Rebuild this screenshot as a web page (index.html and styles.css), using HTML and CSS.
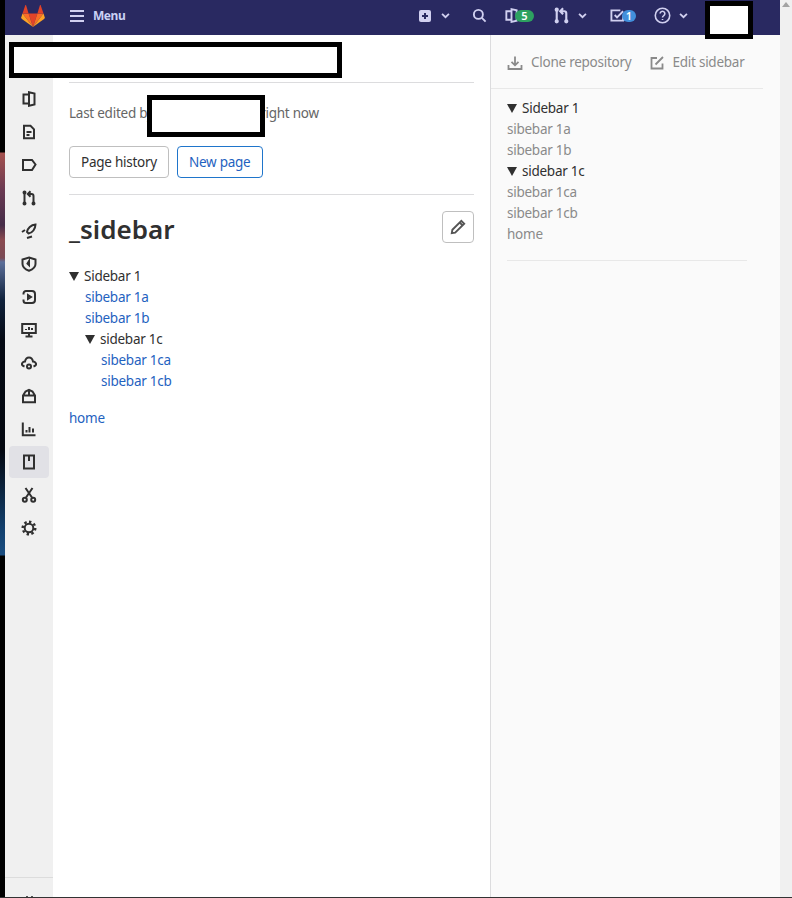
FILE: index.html
```html
<!DOCTYPE html>
<html lang="en">
<head>
    <meta charset="UTF-8">
    <meta name="viewport" content="width=device-width, initial-scale=1.0">
    <title>_sidebar · Wiki</title>
    <link rel="stylesheet" href="styles.css">
</head>

<body>
    <svg class="sprite" xmlns="http://www.w3.org/2000/svg">
        <symbol id="i-issues" viewBox="0 0 16 16"><path d="M8 1.200 13.500 2.500V13.500L8 14.800zM8 3.500H2.500V12.500H8"/></symbol>
        <symbol id="i-repo" viewBox="0 0 16 16"><path d="M3 1.800h6.500L13 5.300v8.900H3zM5.500 8h5M5.500 11h3"/></symbol>
        <symbol id="i-label" viewBox="0 0 16 16"><path d="M2 3h9l3.500 4.500L11 13H2z"/></symbol>
        <symbol id="i-mr" viewBox="0 0 16 16"><path d="M3.500 3v10M12.500 13V6a2 2 0 0 0-2-2H7.500M9.500 1.200 6.800 4l2.700 2.800"/><circle cx="3.500" cy="2.500" r="1"/><circle cx="3.500" cy="13.500" r="1"/><circle cx="12.500" cy="13.500" r="1"/></symbol>
        <symbol id="i-rocket" viewBox="0 0 16 16"><path d="M14.500 1.500c-4.500.3-8 3.600-8.500 7.500l1.500 1.500c4-.5 6.800-4.500 7-9zM1 9l3-2M6 15l5-1.500"/></symbol>
        <symbol id="i-shield" viewBox="0 0 16 16"><path d="M8 1.500 14.500 3.500V8c0 3.200-3 5.500-6.500 6.800C4.500 13.500 1.500 11.200 1.500 8V3.500zM8 5v4L6.500 7.500z"/></symbol>
        <symbol id="i-deploy" viewBox="0 0 16 16"><path d="M2.500 5.500V4.500a2.500 2.500 0 0 1 2.500-2.500h6a3 3 0 0 1 3 3v6a3 3 0 0 1-3 3H5a2.500 2.500 0 0 1-2.500-2.500V10.500M7 6l3 2-3 2z"/></symbol>
        <symbol id="i-monitor" viewBox="0 0 16 16"><path d="M1.200 2h13.600v9H1.200zM8 11v3M4.500 14.500h7M5 8V7M8 8V5M11 8V6"/></symbol>
        <symbol id="i-cloud" viewBox="0 0 16 16"><path d="M3.500 11.500C1.500 10.800.300 9.500 1.300 8 2 7 3 6.600 4 6.500 4.500 4 6 2.500 8 2.500s3.500 1.500 4 4c1 .100 2 .500 2.700 1.500 1 1.500-.200 2.800-2.200 3.500"/><circle cx="8" cy="11.500" r="2"/></symbol>
        <symbol id="i-package" viewBox="0 0 16 16"><path d="M2 7.500 4.500 3.500 8 1.800l3.500 1.700L14 7.500v6.700H2zM2 7.500h12M8 2v5.500"/></symbol>
        <symbol id="i-chart" viewBox="0 0 16 16"><path d="M1.800 1.500v12.700h12.700M5.500 9v2.500M8.500 6v5.500M12 7.500v4"/></symbol>
        <symbol id="i-wiki" viewBox="0 0 16 16"><path d="M3 1.500h10v13H3zM8 2v5"/></symbol>
        <symbol id="i-scissors" viewBox="0 0 16 16"><path d="M5 10.500 11.500 1M11 10.500 4.500 1"/><circle cx="3.800" cy="12.800" r="2"/><circle cx="12.200" cy="12.800" r="2"/></symbol>
        <symbol id="i-gear" viewBox="0 0 16 16"><circle cx="8" cy="8" r="4.300"/><circle class="teeth" cx="8" cy="8" r="6.300" pathLength="32" stroke-dasharray="2 2"/></symbol>
        <symbol id="i-pencil" viewBox="0 0 16 16"><path d="M11 2.500 13.500 5 5.500 13l-3 .5.500-3zM9.500 4l2.500 2.500"/></symbol>
        <symbol id="i-download" viewBox="0 0 16 16"><path d="M8 1.500v8.500M4.500 6.800 8 10.300l3.500-3.500M1.500 10v4h13v-4"/></symbol>
        <symbol id="i-edit" viewBox="0 0 16 16"><path d="M13.500 8.500v5h-11V3H8M6.500 9.500l7.500-7.500"/></symbol>
        <symbol id="i-search" viewBox="0 0 16 16"><circle cx="6.800" cy="6.800" r="4.800"/><path d="M10.500 10.500 14.500 14.500"/></symbol>
        <symbol id="i-chevron" viewBox="0 0 16 16"><path d="M3 5.500 8 10.500 13 5.500"/></symbol>
        <symbol id="i-todo" viewBox="0 0 16 16"><path d="M14 8v5.500H1.500v-11H11M5 7.500l2.500 2.500L14 3.500"/></symbol>
        <symbol id="i-help" viewBox="0 0 16 16"><circle cx="8" cy="8" r="6.800"/><path d="M5.800 6.200a2.200 2.200 0 1 1 3.400 1.900C8.400 8.600 8 9 8 9.800M8 11.300v1"/></symbol>
    </svg>

    <div class="window">
        <div class="wallpaper"></div>

        <div class="app">
            <header class="topbar">
                <svg class="logo" viewBox="0 0 24 24">
                    <polygon fill="#e24329" points="12,23 7.600,9.500 16.400,9.500"/>
                    <polygon fill="#fc6d26" points="12,23 7.600,9.500 1.500,9.500"/>
                    <polygon fill="#fc6d26" points="12,23 16.400,9.500 22.500,9.500"/>
                    <polygon fill="#fca326" points="1.500,9.500 0.200,13.600 0.600,14.800 12,23"/>
                    <polygon fill="#fca326" points="22.500,9.500 23.800,13.600 23.400,14.800 12,23"/>
                    <polygon fill="#e24329" points="1.500,9.500 7.600,9.500 5,1 4.400,1"/>
                    <polygon fill="#e24329" points="22.500,9.500 16.400,9.500 19,1 19.600,1"/>
                </svg>
                <div class="menu-toggle">
                    <span class="burger"><i></i><i></i><i></i></span>
                    <span class="menu-label">Menu</span>
                </div>

                <nav class="top-nav">
                    <div class="nav-item nav-create">
                        <svg class="plus-box" viewBox="0 0 12 12">
                            <rect width="12" height="12" rx="2" fill="#d1d0f0"/>
                            <path d="M6 3v6M3 6h6" stroke="#292961" stroke-width="2"/>
                        </svg>
                        <svg class="chev"><use href="#i-chevron"/></svg>
                    </div>
                    <div class="nav-item nav-search"><svg class="icon-top"><use href="#i-search"/></svg></div>
                    <div class="nav-item nav-issues">
                        <svg class="icon-top"><use href="#i-issues"/></svg>
                        <span class="badge badge-green">5</span>
                    </div>
                    <div class="nav-item nav-mr">
                        <svg class="icon-top"><use href="#i-mr"/></svg>
                        <svg class="chev"><use href="#i-chevron"/></svg>
                    </div>
                    <div class="nav-item nav-todo">
                        <svg class="icon-top"><use href="#i-todo"/></svg>
                        <span class="badge badge-blue">1</span>
                    </div>
                    <div class="nav-item nav-help">
                        <svg class="icon-help"><use href="#i-help"/></svg>
                        <svg class="chev"><use href="#i-chevron"/></svg>
                    </div>
                </nav>
            </header>

            <div class="layout">
                <aside class="side-nav">
                    <div class="side-link"><svg class="icon"><use href="#i-issues"/></svg></div>
                    <div class="side-link"><svg class="icon"><use href="#i-repo"/></svg></div>
                    <div class="side-link"><svg class="icon"><use href="#i-label"/></svg></div>
                    <div class="side-link"><svg class="icon"><use href="#i-mr"/></svg></div>
                    <div class="side-link"><svg class="icon"><use href="#i-rocket"/></svg></div>
                    <div class="side-link"><svg class="icon"><use href="#i-shield"/></svg></div>
                    <div class="side-link"><svg class="icon"><use href="#i-deploy"/></svg></div>
                    <div class="side-link"><svg class="icon"><use href="#i-monitor"/></svg></div>
                    <div class="side-link"><svg class="icon"><use href="#i-cloud"/></svg></div>
                    <div class="side-link"><svg class="icon"><use href="#i-package"/></svg></div>
                    <div class="side-link"><svg class="icon"><use href="#i-chart"/></svg></div>
                    <div class="side-link active"><svg class="icon"><use href="#i-wiki"/></svg></div>
                    <div class="side-link"><svg class="icon"><use href="#i-scissors"/></svg></div>
                    <div class="side-link"><svg class="icon"><use href="#i-gear"/></svg></div>
                    <div class="collapse-row"><span></span><span></span></div>
                </aside>

                <main class="content">
                    <div class="breadcrumbs"></div>
                    <p class="last-edited">Last edited by <span class="author"></span> right now</p>
                    <div class="actions">
                        <a class="btn" href="#">Page history</a>
                        <a class="btn btn-blue" href="#">New page</a>
                    </div>
                    <div class="title-row">
                        <h1>_sidebar</h1>
                        <a class="btn-edit" href="#"><svg class="icon-pencil"><use href="#i-pencil"/></svg></a>
                    </div>
                    <div class="tree">
                        <details open>
                            <summary>Sidebar 1</summary>
                            <a href="#">sibebar 1a</a>
                            <a href="#">sibebar 1b</a>
                            <details open>
                                <summary>sidebar 1c</summary>
                                <a href="#">sibebar 1ca</a>
                                <a href="#">sibebar 1cb</a>
                            </details>
                        </details>
                        <p class="home"><a href="#">home</a></p>
                    </div>
                </main>

                <aside class="wiki-side">
                    <div class="wiki-actions">
                        <a href="#"><svg class="icon-gray"><use href="#i-download"/></svg>Clone repository</a>
                        <a href="#"><svg class="icon-gray"><use href="#i-edit"/></svg>Edit sidebar</a>
                    </div>
                    <div class="wiki-tree">
                        <details open>
                            <summary>Sidebar 1</summary>
                            <a href="#">sibebar 1a</a>
                            <a href="#">sibebar 1b</a>
                            <details open>
                                <summary>sidebar 1c</summary>
                                <a href="#">sibebar 1ca</a>
                                <a href="#">sibebar 1cb</a>
                            </details>
                        </details>
                        <a href="#">home</a>
                    </div>
                </aside>
            </div>

            <div class="redact redact-path"></div>
            <div class="redact redact-author"></div>
            <div class="redact redact-avatar"></div>
        </div>

        <div class="scrollbar"><span class="arrow-up"></span></div>
    </div>
</body>
</html>
```

FILE: styles.css
```css
* {
    box-sizing: border-box;
}

html, body {
    margin: 0;
    height: 100%;
    overflow: hidden;
}

body {
    font-family: 'Noto Sans', sans-serif;
    font-size: 13.5px;
    line-height: 21px;
    letter-spacing: -0.25px;
    color: #303030;
    background-color: #fff;
}

a {
    text-decoration: none;
}

.sprite {
    display: none;
}

svg {
    fill: none;
    stroke: currentColor;
    stroke-width: 2;
}

.window {
    display: flex;
    height: 898px;
    border-bottom: 1px solid #333;
}

.wallpaper {
    width: 5px;
    background: linear-gradient(to bottom,
        #000 0, #000 152px,
        #a5524f 153px, #6a3a52 190px, #452c48 225px,
        #8a4a50 240px, #7a4a55 258px, #5c6f9a 262px,
        #10223c 300px, #050a14 340px, #040810 450px,
        #12406e 530px, #1a4d80 555px, #000 556px);
}

.app {
    position: relative;
    flex: 1;
    display: flex;
    flex-direction: column;
    min-width: 0;
}

.scrollbar {
    width: 12px;
    background-color: #f0f0f0;
    display: flex;
    justify-content: center;
    padding-top: 2px;
}

.arrow-up {
    width: 0;
    height: 0;
    border-left: 4px solid transparent;
    border-right: 4px solid transparent;
    border-bottom: 5px solid #a3a3a3;
}

/* top bar */
.topbar {
    display: flex;
    align-items: center;
    height: 35px;
    background-color: #292961;
    color: #d1d0f0;
    padding: 0 0 4px 16px;
}

.logo {
    width: 24px;
    height: 24px;
    stroke: none;
}

.menu-toggle {
    display: flex;
    align-items: center;
    width: 56px;
    margin-left: 25px;
}

.burger {
    display: flex;
    flex-direction: column;
    gap: 3px;
    width: 14px;
}

.burger i {
    display: block;
    height: 2px;
    background-color: #d1d0f0;
}

.menu-label {
    margin-left: 9px;
    font-size: 12px;
    font-weight: 700;
    letter-spacing: -0.45px;
    color: #c9d1f5;
}

.top-nav {
    display: flex;
    align-items: center;
    margin-left: 293px;
}

.nav-item {
    display: flex;
    align-items: center;
}

.nav-create { width: 53px; }
.nav-search { width: 32px; }
.nav-issues { width: 49px; }
.nav-mr { width: 57px; }
.nav-todo { width: 44px; }
.nav-help { width: 49px; }

.plus-box {
    width: 12px;
    height: 12px;
    stroke: none;
}

.icon-top {
    width: 15px;
    height: 15px;
}

.nav-mr .icon-top {
    width: 17px;
    height: 17px;
}

.icon-help {
    width: 17px;
    height: 17px;
    stroke-width: 1.5;
}

.chev {
    width: 11px;
    height: 11px;
    margin-left: 7px;
    stroke-width: 2.6;
}

.nav-create .chev { margin-left: 9px; }

.badge {
    height: 12px;
    border-radius: 6px;
    color: #fff;
    font-size: 11px;
    font-weight: 600;
    line-height: 12px;
    letter-spacing: 0;
    text-align: center;
}

.badge-green {
    width: 19px;
    margin-left: -4px;
    background-color: #2da160;
}

.badge-blue {
    width: 14px;
    margin-left: -3px;
    background-color: #428fdc;
}

/* main layout */
.layout {
    flex: 1;
    display: flex;
    min-height: 0;
}

.side-nav {
    position: relative;
    display: flex;
    flex-direction: column;
    align-items: center;
    width: 48px;
    padding-top: 48px;
    background-color: #f0f0f0;
    color: #303030;
}

.side-link {
    display: flex;
    align-items: center;
    justify-content: center;
    width: 40px;
    height: 32px;
    margin-bottom: 1px;
    border-radius: 4px;
}

.side-link.active {
    background-color: #e1e1e6;
}

.icon {
    width: 16px;
    height: 16px;
}

.teeth {
    stroke-width: 2.4;
}

.collapse-row {
    position: absolute;
    left: 0;
    right: 0;
    bottom: 0;
    height: 20px;
    border-top: 1px solid #dcdcdc;
    display: flex;
    align-items: flex-end;
    justify-content: center;
    gap: 3px;
}

.collapse-row span {
    width: 2px;
    height: 1px;
    background-color: #555;
}

.content {
    width: 437px;
    padding: 0 16px;
    background-color: #fff;
}

.breadcrumbs {
    height: 48px;
    border-bottom: 1px solid #dcdcde;
}

.last-edited {
    margin: 20px 0 0;
    height: 21px;
    color: #666;
}

.author {
    display: inline-block;
    width: 100px;
}

.actions {
    display: flex;
    gap: 8px;
    margin-top: 22px;
    padding-bottom: 16px;
    border-bottom: 1px solid #dcdcde;
}

.btn {
    display: block;
    height: 32px;
    padding: 5px 11px;
    border: 1px solid #bfbfbf;
    border-radius: 4px;
    color: #303030;
}

.btn-blue {
    border-color: #1f75cb;
    color: #1f62c0;
}

.title-row {
    display: flex;
    align-items: flex-start;
    justify-content: space-between;
    margin-top: 16px;
}

h1 {
    margin: 0;
    font-size: 26px;
    font-weight: 600;
    line-height: 36px;
    letter-spacing: 0;
    color: #303030;
}

.btn-edit {
    display: flex;
    align-items: center;
    justify-content: center;
    width: 32px;
    height: 32px;
    border: 1px solid #bfbfbf;
    border-radius: 4px;
    color: #555;
}

.icon-pencil {
    width: 18px;
    height: 18px;
    stroke-width: 1.7;
}

.tree {
    margin-top: 19px;
}

summary {
    list-style: none;
}

summary::before {
    content: "";
    display: inline-block;
    vertical-align: 0;
    margin-right: 5px;
    border-left: 5px solid transparent;
    border-right: 5px solid transparent;
    border-top: 9px solid #303030;
}

.tree a,
.wiki-tree a {
    display: block;
}

.tree a {
    color: #1f62c0;
    margin-left: 16px;
}

.tree details details {
    margin-left: 16px;
}

.tree .home {
    margin: 16px 0 0;
}

.tree .home a {
    margin-left: 0;
}

.wiki-side {
    flex: 1;
    border-left: 1px solid #dcdcde;
    background-color: #fafafa;
}

.wiki-actions {
    display: flex;
    gap: 17px;
    width: 272px;
    height: 54px;
    padding: 17px 0 0 16px;
    border-bottom: 1px solid #e8e8e8;
}

.wiki-actions a {
    display: flex;
    align-items: center;
    height: 21px;
    color: #8a8a8a;
    white-space: nowrap;
}

.icon-gray {
    width: 16px;
    height: 16px;
    margin-right: 8px;
    stroke-width: 1.8;
}

.wiki-tree {
    width: 240px;
    margin-left: 16px;
    padding: 9px 0 15px;
    border-bottom: 1px solid #e8e8e8;
}

.wiki-tree a {
    color: #8a8a8a;
}

/* black boxes painted over names in the screenshot */
.redact {
    position: absolute;
    background-color: #fff;
    border: 5px solid #000;
}

.redact-path {
    left: 4px;
    top: 42px;
    width: 333px;
    height: 36px;
}

.redact-author {
    left: 142px;
    top: 95px;
    width: 118px;
    height: 42px;
}

.redact-avatar {
    left: 700px;
    top: 1px;
    width: 48px;
    height: 38px;
}
```
